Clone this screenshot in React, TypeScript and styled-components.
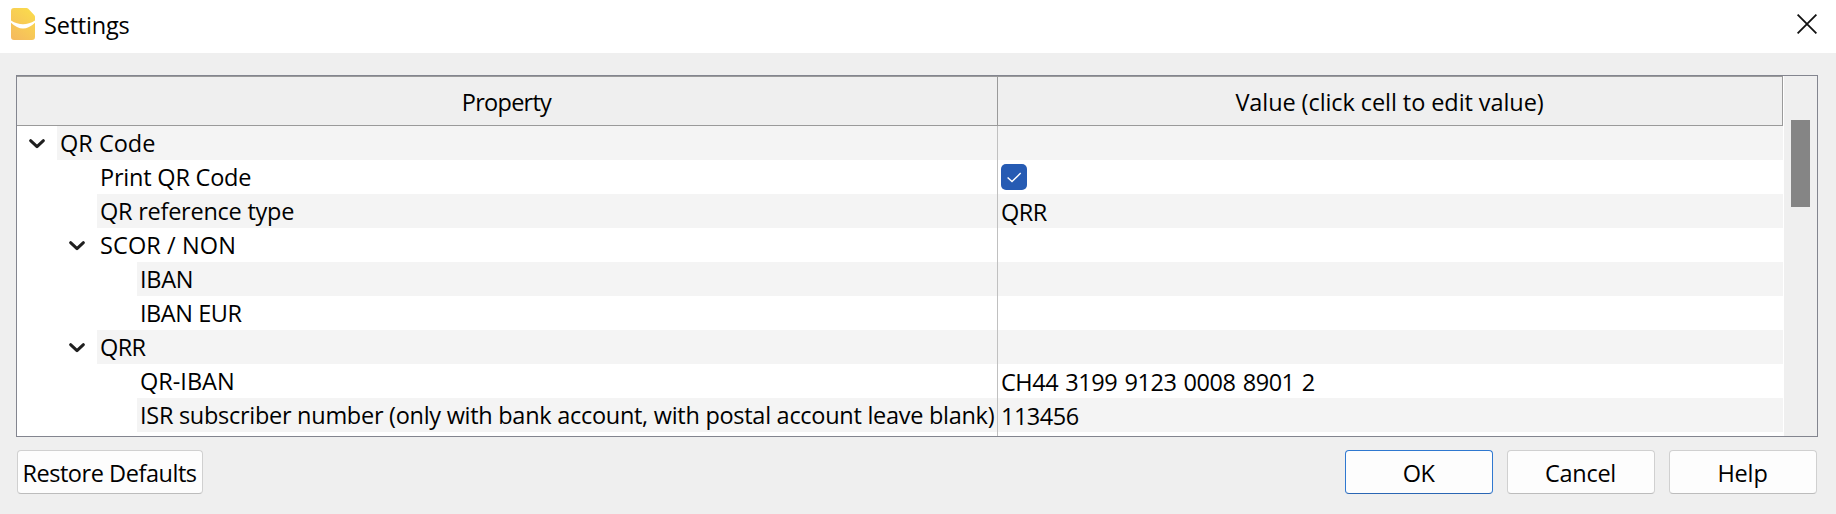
import React from "react";
import styled, { createGlobalStyle } from "styled-components";

const GlobalStyle = createGlobalStyle`
  *, *::before, *::after { box-sizing: border-box; }
  body {
    margin: 0;
    background: #efefef;
    color: #000;
    font-family: "Open Sans", "Noto Sans", sans-serif;
    font-size: 23.5px;
  }
`;

const Dialog = styled.div`
  width: 1836px;
  height: 514px;
  display: flex;
  flex-direction: column;
  background: #efefef;
  overflow: hidden;
`;

const TitleBar = styled.header`
  height: 53px;
  flex: none;
  display: flex;
  align-items: center;
  justify-content: space-between;
  padding: 0 19px 5px 11px;
  background: #fff;
`;

const Title = styled.div`
  display: flex;
  align-items: center;
  gap: 9px;
  height: 48px;

  svg { display: block; }
`;

const TitleText = styled.div`
  padding-top: 2px;
`;

const CloseButton = styled.button`
  display: flex;
  padding: 0;
  border: 0;
  background: none;
`;

const Label = styled.span<{ $track?: number; $word?: number }>`
  white-space: nowrap;
  letter-spacing: ${({ $track = 0 }) => $track}px;
  word-spacing: ${({ $word = 0 }) => $word}px;
`;

const TreeFrame = styled.section`
  display: flex;
  height: 362px;
  margin: 22px 18px 0 16px;
  border: 1px solid #83858f;
  background: #fff;
`;

const Tree = styled.div`
  width: 1766px;
  display: flex;
  flex-direction: column;
`;

const HeaderRow = styled.div`
  display: flex;
  height: 50px;
  flex: none;
`;

const HeaderCell = styled.div<{ $width: number }>`
  width: ${({ $width }) => $width}px;
  padding-right: 1px;
  border: solid #9a9a9a;
  border-width: 1px 1px 1px 0;
  background: #efefef;
  text-align: center;
  line-height: 50px;
`;

const Rows = styled.div`
  flex: 1;
  display: flex;
  flex-direction: column;
  background: linear-gradient(#c0c0c0, #c0c0c0) 980px 0 / 1px 100% no-repeat;
`;

const Row = styled.div`
  display: flex;
  height: 34px;
  line-height: 34px;
`;

const Branch = styled.div<{ $level: number }>`
  width: ${({ $level }) => $level * 40}px;
  display: flex;
  justify-content: flex-end;
  padding: 12px 11px 0 0;

  svg { display: block; }
`;

const PropertyCell = styled.div<{ $shaded: boolean }>`
  flex: 1;
  padding-left: 3px;
  background: ${({ $shaded }) => ($shaded ? "#f4f4f4" : "#fff")};
`;

const PropertySide = styled.div`
  display: flex;
  width: 980px;
  margin-right: 1px;
`;

const ValueCell = styled.div<{ $shaded: boolean }>`
  width: 785px;
  padding: 1px 0 0 3px;
  background: ${({ $shaded }) => ($shaded ? "#f4f4f4" : "#fff")};
`;

const CheckBox = styled.div`
  width: 26px;
  height: 26px;
  margin-top: 3px;
  border-radius: 5px;
  background: #265bb3;

  svg { display: block; }
`;

const ScrollBar = styled.div`
  width: 33px;
  margin-left: 1px;
  padding: 44px 7px 0;
  background: #efefef;
`;

const Thumb = styled.div`
  height: 87px;
  background: #858585;
`;

const Footer = styled.footer`
  display: flex;
  justify-content: space-between;
  padding: 13px 19px 0 17px;
`;

const ButtonGroup = styled.div`
  display: flex;
  gap: 14px;
`;

const Button = styled.button<{ $width?: number; $primary?: boolean }>`
  width: ${({ $width = 148 }) => $width}px;
  height: 44px;
  padding: 2px 1px 0 0;
  border: 1px solid ${({ $primary }) => ($primary ? "#2f78d0" : "#d0d0d0")};
  border-bottom-color: ${({ $primary }) => ($primary ? "#2a66b4" : "#bcbcbc")};
  border-radius: 4px;
  background: #fdfdfd;
  color: #000;
  font: inherit;
  line-height: 40px;
`;

const Logo = () => (
  <svg width="24" height="32" viewBox="0 0 24 32">
    <defs>
      <linearGradient id="logoFill" x1="0.8" y1="0" x2="0.2" y2="1">
        <stop offset="0" stopColor="#fadb4c" />
        <stop offset="1" stopColor="#f5bb5e" />
      </linearGradient>
    </defs>
    <path
      d="M3 0H15.5Q16.5 0 17.3 .8L23.2 6.9Q24 7.7 24 8.8V29Q24 32 21 32H3Q0 32 0 29V3Q0 0 3 0Z"
      fill="url(#logoFill)"
    />
    <path d="M0 12.4Q12 20 24 12.4V14.8Q18 20.6 12 20.6Q6 20.6 0 14.8Z" fill="#fff" />
  </svg>
);

const CloseIcon = () => (
  <svg width="20" height="20" viewBox="0 0 20 20">
    <path d="M.6 .6L19.4 19.4M19.4 .6L.6 19.4" fill="none" stroke="#111" strokeWidth="1.8" />
  </svg>
);

const Chevron = () => (
  <svg width="18" height="12" viewBox="0 0 18 12">
    <path d="M2.6 2.7L9 8.7L15.4 2.7" fill="none" stroke="#1f1f1f" strokeWidth="3" strokeLinecap="round" strokeLinejoin="round" />
  </svg>
);

const CheckMark = () => (
  <svg width="26" height="26" viewBox="0 0 26 26">
    <path d="M6.6 13.4L11 17.6L19.7 9.1" fill="none" stroke="#fff" strokeWidth="1.4" />
  </svg>
);

type Item = {
  level: number;
  name: string;
  track?: number;
  open?: boolean;
  checked?: boolean;
  value?: string;
  valueTrack?: number;
  valueWord?: number;
};

const items: Item[] = [
  { level: 1, name: "QR Code", open: true },
  { level: 2, name: "Print QR Code", track: -0.21, checked: true },
  { level: 2, name: "QR reference type", track: -0.24, value: "QRR", valueTrack: -0.5 },
  { level: 2, name: "SCOR / NON", track: 0.1, open: true },
  { level: 3, name: "IBAN", track: -0.3 },
  { level: 3, name: "IBAN EUR", track: -0.45 },
  { level: 2, name: "QRR", track: -0.6, open: true },
  {
    level: 3,
    name: "QR-IBAN",
    track: 0,
    value: "CH44 3199 9123 0008 8901 2",
    valueTrack: -0.45,
    valueWord: 1.5,
  },
  {
    level: 3,
    name: "ISR subscriber number (only with bank account, with postal account leave blank)",
    track: -0.28,
    value: "113456",
    valueTrack: -0.5,
  },
];

export default function App() {
  return (
    <>
      <GlobalStyle />
      <Dialog>
        <TitleBar>
          <Title>
            <Logo />
            <TitleText>
              <Label $track={-0.2}>Settings</Label>
            </TitleText>
          </Title>
          <CloseButton aria-label="Close">
            <CloseIcon />
          </CloseButton>
        </TitleBar>
        <TreeFrame>
          <Tree>
            <HeaderRow>
              <HeaderCell $width={981}>
                <Label $track={-0.74}>Property</Label>
              </HeaderCell>
              <HeaderCell $width={785}>
                <Label $track={-0.08}>Value (click cell to edit value)</Label>
              </HeaderCell>
            </HeaderRow>
            <Rows>
              {items.map((item, i) => {
                const shaded = i % 2 === 0;
                return (
                  <Row key={item.name}>
                    <PropertySide>
                      <Branch $level={item.level}>{item.open && <Chevron />}</Branch>
                      <PropertyCell $shaded={shaded}>
                        <Label $track={item.track}>{item.name}</Label>
                      </PropertyCell>
                    </PropertySide>
                    <ValueCell $shaded={shaded}>
                      {item.checked && (
                        <CheckBox>
                          <CheckMark />
                        </CheckBox>
                      )}
                      {item.value && (
                        <Label $track={item.valueTrack} $word={item.valueWord}>
                          {item.value}
                        </Label>
                      )}
                    </ValueCell>
                  </Row>
                );
              })}
            </Rows>
          </Tree>
          <ScrollBar>
            <Thumb />
          </ScrollBar>
        </TreeFrame>
        <Footer>
          <Button $width={186}>
            <Label $track={-0.45}>Restore Defaults</Label>
          </Button>
          <ButtonGroup>
            <Button $primary>
              <Label $track={-0.7}>OK</Label>
            </Button>
            <Button>
              <Label $track={-0.3}>Cancel</Label>
            </Button>
            <Button>
              <Label $track={-0.15}>Help</Label>
            </Button>
          </ButtonGroup>
        </Footer>
      </Dialog>
    </>
  );
}
